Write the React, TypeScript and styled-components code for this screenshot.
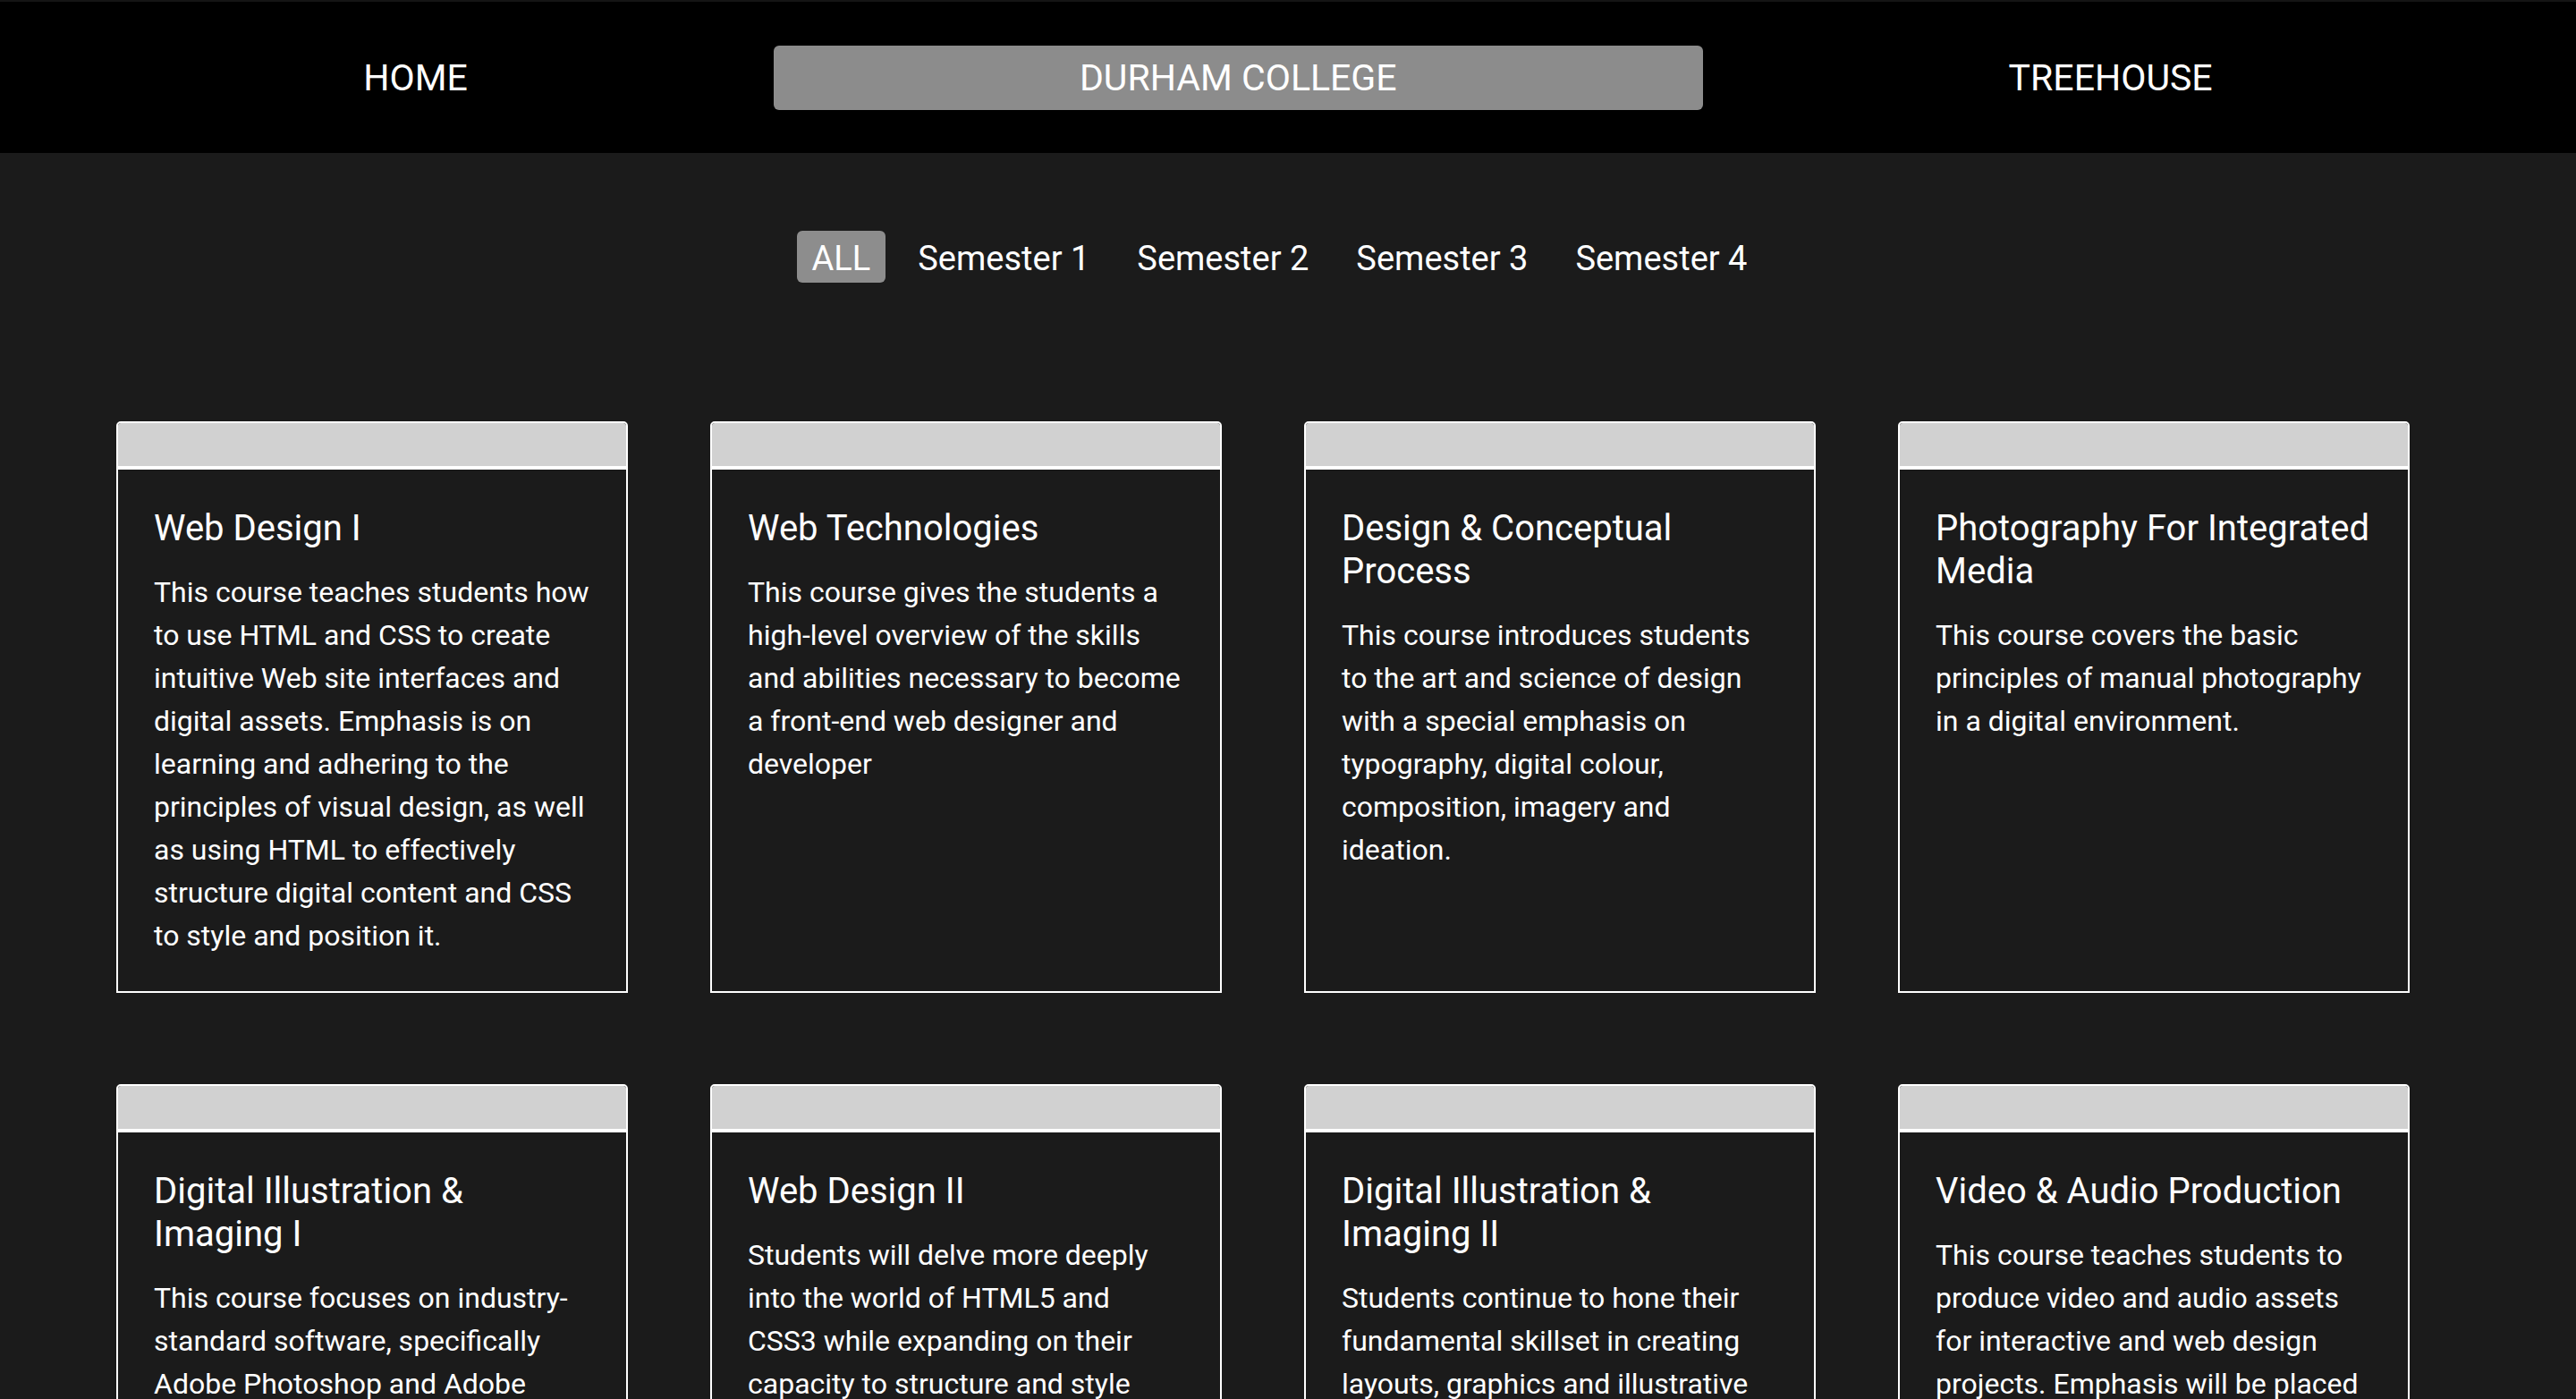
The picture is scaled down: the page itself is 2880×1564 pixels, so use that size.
import React from 'react';
import styled, { createGlobalStyle } from 'styled-components';

const GlobalStyle = createGlobalStyle`
  html, body {
    margin: 0;
    padding: 0;
    background: #1b1b1b;
  }
  body {
    font-family: Roboto, "Noto Sans", "Liberation Sans", sans-serif;
    color: #ffffff;
  }
  *, *::before, *::after {
    box-sizing: border-box;
  }
`;

const Header = styled.header`
  height: 171px;
  background: #000000;
  border-top: 2px solid #151515;
  display: flex;
  justify-content: center;
  align-items: center;
`;

const NavLink = styled.a<{ $active?: boolean }>`
  display: flex;
  align-items: center;
  height: 72px;
  padding: 0 342px;
  font-size: 41px;
  color: #ffffff;
  text-decoration: none;
  white-space: nowrap;
  border-radius: 6px;
  background: ${(p) => (p.$active ? '#8c8c8c' : 'transparent')};
`;

const FilterBar = styled.nav`
  display: flex;
  justify-content: center;
  margin: 87px 0 155px;
`;

const FilterItem = styled.a<{ $active?: boolean }>`
  display: block;
  padding: 9px 17px 5px;
  margin-right: 19px;
  font-size: 38px;
  line-height: 44px;
  color: #ffffff;
  text-decoration: none;
  white-space: nowrap;
  border-radius: 6px;
  background: ${(p) => (p.$active ? '#8d8d8d' : 'transparent')};
`;

const CardGrid = styled.main`
  display: grid;
  grid-template-columns: repeat(4, 572px);
  column-gap: 92px;
  row-gap: 102px;
  padding: 0 0 80px 130px;
`;

const Card = styled.article`
  border: 2px solid #ffffff;
  border-radius: 5px 5px 0 0;
  overflow: hidden;
  background: #1b1b1b;
  display: flex;
  flex-direction: column;
`;

const CardImage = styled.div`
  height: 52px;
  background: #d1d1d1;
  border-bottom: 4px solid #ffffff;
`;

const CardBody = styled.div`
  padding: 42px 40px 38px;
  flex: 1;
`;

const CardTitle = styled.h2`
  margin: 0 0 23px;
  font-size: 40px;
  font-weight: 400;
  line-height: 48px;
`;

const CardText = styled.p`
  margin: 0;
  font-size: 32px;
  line-height: 48px;
`;

const courses = [
  {
    title: 'Web Design I',
    text: 'This course teaches students how to use HTML and CSS to create intuitive Web site interfaces and digital assets. Emphasis is on learning and adhering to the principles of visual design, as well as using HTML to effectively structure digital content and CSS to style and position it.',
  },
  {
    title: 'Web Technologies',
    text: 'This course gives the students a high-level overview of the skills and abilities necessary to become a front-end web designer and developer',
  },
  {
    title: 'Design & Conceptual Process',
    text: 'This course introduces students to the art and science of design with a special emphasis on typography, digital colour, composition, imagery and ideation.',
  },
  {
    title: 'Photography For Integrated Media',
    text: 'This course covers the basic principles of manual photography in a digital environment.',
  },
  {
    title: 'Digital Illustration & Imaging I',
    text: 'This course focuses on industry-standard software, specifically Adobe Photoshop and Adobe Illustrator, used to create and edit digital images and illustrations.',
  },
  {
    title: 'Web Design II',
    text: 'Students will delve more deeply into the world of HTML5 and CSS3 while expanding on their capacity to structure and style modern, responsive web pages.',
  },
  {
    title: 'Digital Illustration & Imaging II',
    text: 'Students continue to hone their fundamental skillset in creating layouts, graphics and illustrative elements for print and screen.',
  },
  {
    title: 'Video & Audio Production',
    text: 'This course teaches students to produce video and audio assets for interactive and web design projects. Emphasis will be placed on planning, capturing and editing.',
  },
];

const filters = ['ALL', 'Semester 1', 'Semester 2', 'Semester 3', 'Semester 4'];

export default function App() {
  return (
    <>
      <GlobalStyle />
      <Header>
        <NavLink href="#">HOME</NavLink>
        <NavLink href="#" $active>
          DURHAM COLLEGE
        </NavLink>
        <NavLink href="#">TREEHOUSE</NavLink>
      </Header>
      <FilterBar>
        {filters.map((f, i) => (
          <FilterItem key={f} href="#" $active={i === 0}>
            {f}
          </FilterItem>
        ))}
      </FilterBar>
      <CardGrid>
        {courses.map((c) => (
          <Card key={c.title}>
            <CardImage />
            <CardBody>
              <CardTitle>{c.title}</CardTitle>
              <CardText>{c.text}</CardText>
            </CardBody>
          </Card>
        ))}
      </CardGrid>
    </>
  );
}
